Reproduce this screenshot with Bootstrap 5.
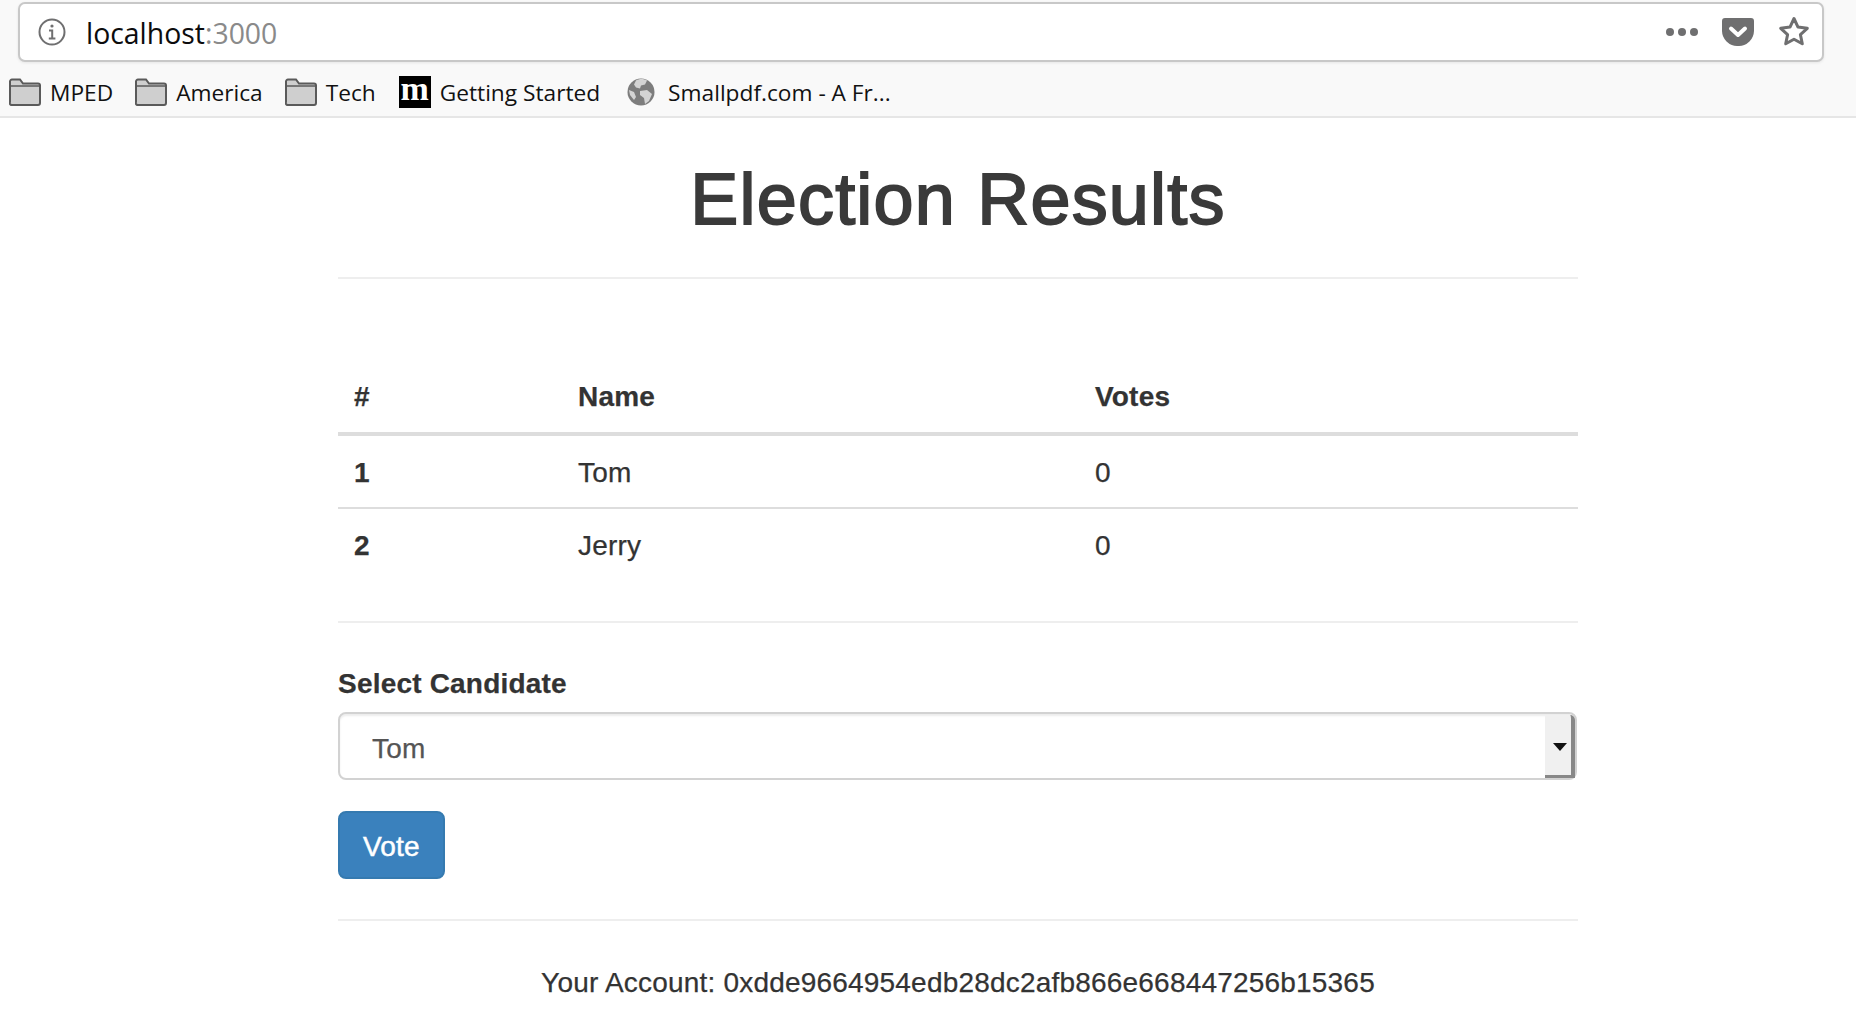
<!DOCTYPE html>
<html lang="en">
<head>
<meta charset="utf-8">
<title>Election Results</title>
<link href="https://cdn.jsdelivr.net/npm/bootstrap@5.3.0/dist/css/bootstrap.min.css" rel="stylesheet">
<style>
html,body{height:1014px;overflow:hidden}
body{font-family:"Liberation Sans",Arial,sans-serif;font-size:28px;line-height:40px;color:#333;background:#fff}
.chrome{height:118px;background:#f9f9f9;border-bottom:2px solid #e6e6e6;padding:2px 32px 0 18px}
.urlbar{height:60px;background:#fff;border:2px solid #c8c8c8;border-radius:7px;padding:0 12px 0 18px;box-shadow:0 1px 3px rgba(0,0,0,.08)}
.urltext{font-family:"Open Sans",sans-serif;font-size:28.4px;line-height:1;color:#0c0c0d;margin-left:20px;padding-top:2px}
.urltext span{color:#8a8a8a}
.marks{height:58px;margin-left:-9px;padding-top:2px;font-family:"Open Sans",sans-serif;font-size:22.7px;color:#111}
.markitem{display:flex;align-items:center;gap:9px;margin-right:22px;white-space:nowrap}
.markitem.wide{margin-left:1px;margin-right:27px}
.marklabel{padding-top:2px}
.mlogo{width:32px;height:32px;background:#000;color:#fff;font-family:"Liberation Serif",serif;font-weight:700;font-size:34px;line-height:26px;text-align:center;display:block}
.page{width:1240px;margin:0 0 0 338px;letter-spacing:.2px;-webkit-text-stroke:.25px #333}
.headline{font-size:72px;line-height:80px;font-weight:400;color:#3a3a3a;text-align:center;margin:0;padding:41px 0 38px;border-bottom:2px solid #eee;letter-spacing:1.2px;-webkit-text-stroke:1.8px #3a3a3a}
.votes{margin:81px 0 0;width:100%;--bs-table-color:#333;--bs-table-bg:transparent;font-size:28px}
.votes th,.votes td{padding:16px;line-height:40px;border-bottom:2px solid #ddd;box-shadow:none}
.votes thead th{border-bottom:4px solid #ddd;vertical-align:bottom;font-weight:700;padding:17px 16px 15px}
.votes tbody tr:first-child th,.votes tbody tr:first-child td{padding:17px 16px 14px}
.votes tbody tr:last-child th,.votes tbody tr:last-child td{border-bottom:0;padding:17px 16px 16px}
.cola{width:224px}.colb{width:517px}
.rule{margin:39px 0 0;border:0;border-top:2px solid #eee;opacity:1}
.pick{margin-top:41px}
.pick label{font-weight:700;margin:0 0 8px;display:block;font-size:28px;line-height:40px}
.pickwrap{position:relative;width:1239px}
.pickwrap select{width:100%;height:68px;font-size:28px;line-height:40px;padding:15px 32px 9px;border:2px solid #d2d2d2;border-radius:8px;color:#555;background:#fff;box-shadow:inset 0 2px 2px rgba(0,0,0,.075);appearance:none;font-family:inherit;letter-spacing:.2px;-webkit-text-stroke:.25px #555}
.pickarrow{position:absolute;top:3px;right:2px;width:30px;height:63px;background:#f0f0f0;border-right:4px solid #888;border-bottom:3px solid #888;border-radius:0 5px 0 0;pointer-events:none}
.pickarrow::after{content:"";position:absolute;left:8px;top:28px;border-left:7px solid transparent;border-right:7px solid transparent;border-top:8px solid #111}
.votebtn{margin-top:31px;height:68px;padding:14px 23px 10px;font-size:28px;line-height:40px;border-radius:8px;background:#3a81bd;border:2px solid #357ab0;color:#fff;font-weight:400;display:block;-webkit-text-stroke:.5px #fff;letter-spacing:.2px}
.rule2{margin:40px 0 0}
.account{text-align:center;margin:42px 0 0;font-size:28px;line-height:40px}
</style>
</head>
<body>
<header class="chrome">
  <div class="urlbar d-flex align-items-center">
    <svg width="28" height="28" viewBox="0 0 28 28" fill="none" stroke="#6f6f70" stroke-width="2"><circle cx="14" cy="14" r="12.5"/><circle cx="14" cy="8" r="1.6" fill="#6f6f70" stroke="none"/><path d="M11 12.5h3.2V20M10.8 20.5h6.6" /></svg>
    <div class="urltext">localhost<span>:3000</span></div>
    <div class="d-flex align-items-center ms-auto">
      <svg width="32" height="10" viewBox="0 0 32 10" fill="#6f6f70" class="me-4"><circle cx="4" cy="5" r="4"/><circle cx="16" cy="5" r="4"/><circle cx="28" cy="5" r="4"/></svg>
      <svg width="32" height="28" viewBox="0 0 32 28" class="me-4"><path d="M3 0h26a3 3 0 0 1 3 3v9a15.500 15.500 0 0 1-16 16A15.500 15.500 0 0 1 0 12V3a3 3 0 0 1 3-3z" fill="#6f6f70"/><path d="M9 10.500l7 6.500 7-6.500" fill="none" stroke="#fff" stroke-width="4" stroke-linecap="round" stroke-linejoin="round"/></svg>
      <svg width="32" height="32" viewBox="0 0 32 32"><path d="M16 2.500l4 8.600 9.300 1.200-6.900 6.300 1.900 9.200L16 23.200l-8.300 4.600 1.900-9.200-6.900-6.300L12 11.100z" fill="none" stroke="#6f6f70" stroke-width="3" stroke-linejoin="round"/></svg>
    </div>
  </div>
  <nav class="marks d-flex align-items-center">
    <div class="markitem"><svg width="32" height="28" viewBox="0 0 32 28"><path d="M1 24V3.500A2 2 0 0 1 3 1.500h8l3 4h15a2 2 0 0 1 2 2V25a2 2 0 0 1-2 2H3a2 2 0 0 1-2-3z" fill="#cfcfcf" stroke="#5a5a5a" stroke-width="2"/><path d="M1 8h30" stroke="#5a5a5a" stroke-width="1.500"/></svg><span class="marklabel">MPED</span></div>
    <div class="markitem"><svg width="32" height="28" viewBox="0 0 32 28"><path d="M1 24V3.500A2 2 0 0 1 3 1.500h8l3 4h15a2 2 0 0 1 2 2V25a2 2 0 0 1-2 2H3a2 2 0 0 1-2-3z" fill="#cfcfcf" stroke="#5a5a5a" stroke-width="2"/><path d="M1 8h30" stroke="#5a5a5a" stroke-width="1.500"/></svg><span class="marklabel">America</span></div>
    <div class="markitem"><svg width="32" height="28" viewBox="0 0 32 28"><path d="M1 24V3.500A2 2 0 0 1 3 1.500h8l3 4h15a2 2 0 0 1 2 2V25a2 2 0 0 1-2 2H3a2 2 0 0 1-2-3z" fill="#cfcfcf" stroke="#5a5a5a" stroke-width="2"/><path d="M1 8h30" stroke="#5a5a5a" stroke-width="1.500"/></svg><span class="marklabel">Tech</span></div>
    <div class="markitem wide"><span class="mlogo">m</span><span class="marklabel">Getting Started</span></div>
    <div class="markitem"><svg width="28" height="28" viewBox="0 0 28 28" class="me-1"><circle cx="14" cy="14" r="13.500" fill="#7d7d7d"/><path d="M9 2.500c3-2 8-2 11 0l-2 4-4 1-1 3-4-1-2-3zM13 13l7-1 5 4-3 7-4 3-1-6-4-3zM2 12l5 2 2 5-2 3-4-5z" fill="#d4d4d4"/></svg><span class="marklabel">Smallpdf.com - A Fr...</span></div>
  </nav>
</header>
<main class="page">
  <h1 class="headline">Election Results</h1>
  <table class="votes table mb-0">
    <thead><tr><th class="cola">#</th><th class="colb">Name</th><th>Votes</th></tr></thead>
    <tbody>
      <tr><th>1</th><td>Tom</td><td>0</td></tr>
      <tr><th>2</th><td>Jerry</td><td>0</td></tr>
    </tbody>
  </table>
  <hr class="rule">
  <form class="pick">
    <label for="who">Select Candidate</label>
    <div class="pickwrap">
      <select id="who"><option>Tom</option><option>Jerry</option></select>
      <span class="pickarrow"></span>
    </div>
    <button type="button" class="btn votebtn">Vote</button>
  </form>
  <hr class="rule rule2">
  <p class="account">Your Account: 0xdde9664954edb28dc2afb866e668447256b15365</p>
</main>
<script src="https://cdn.jsdelivr.net/npm/bootstrap@5.3.0/dist/js/bootstrap.bundle.min.js"></script>
</body>
</html>
